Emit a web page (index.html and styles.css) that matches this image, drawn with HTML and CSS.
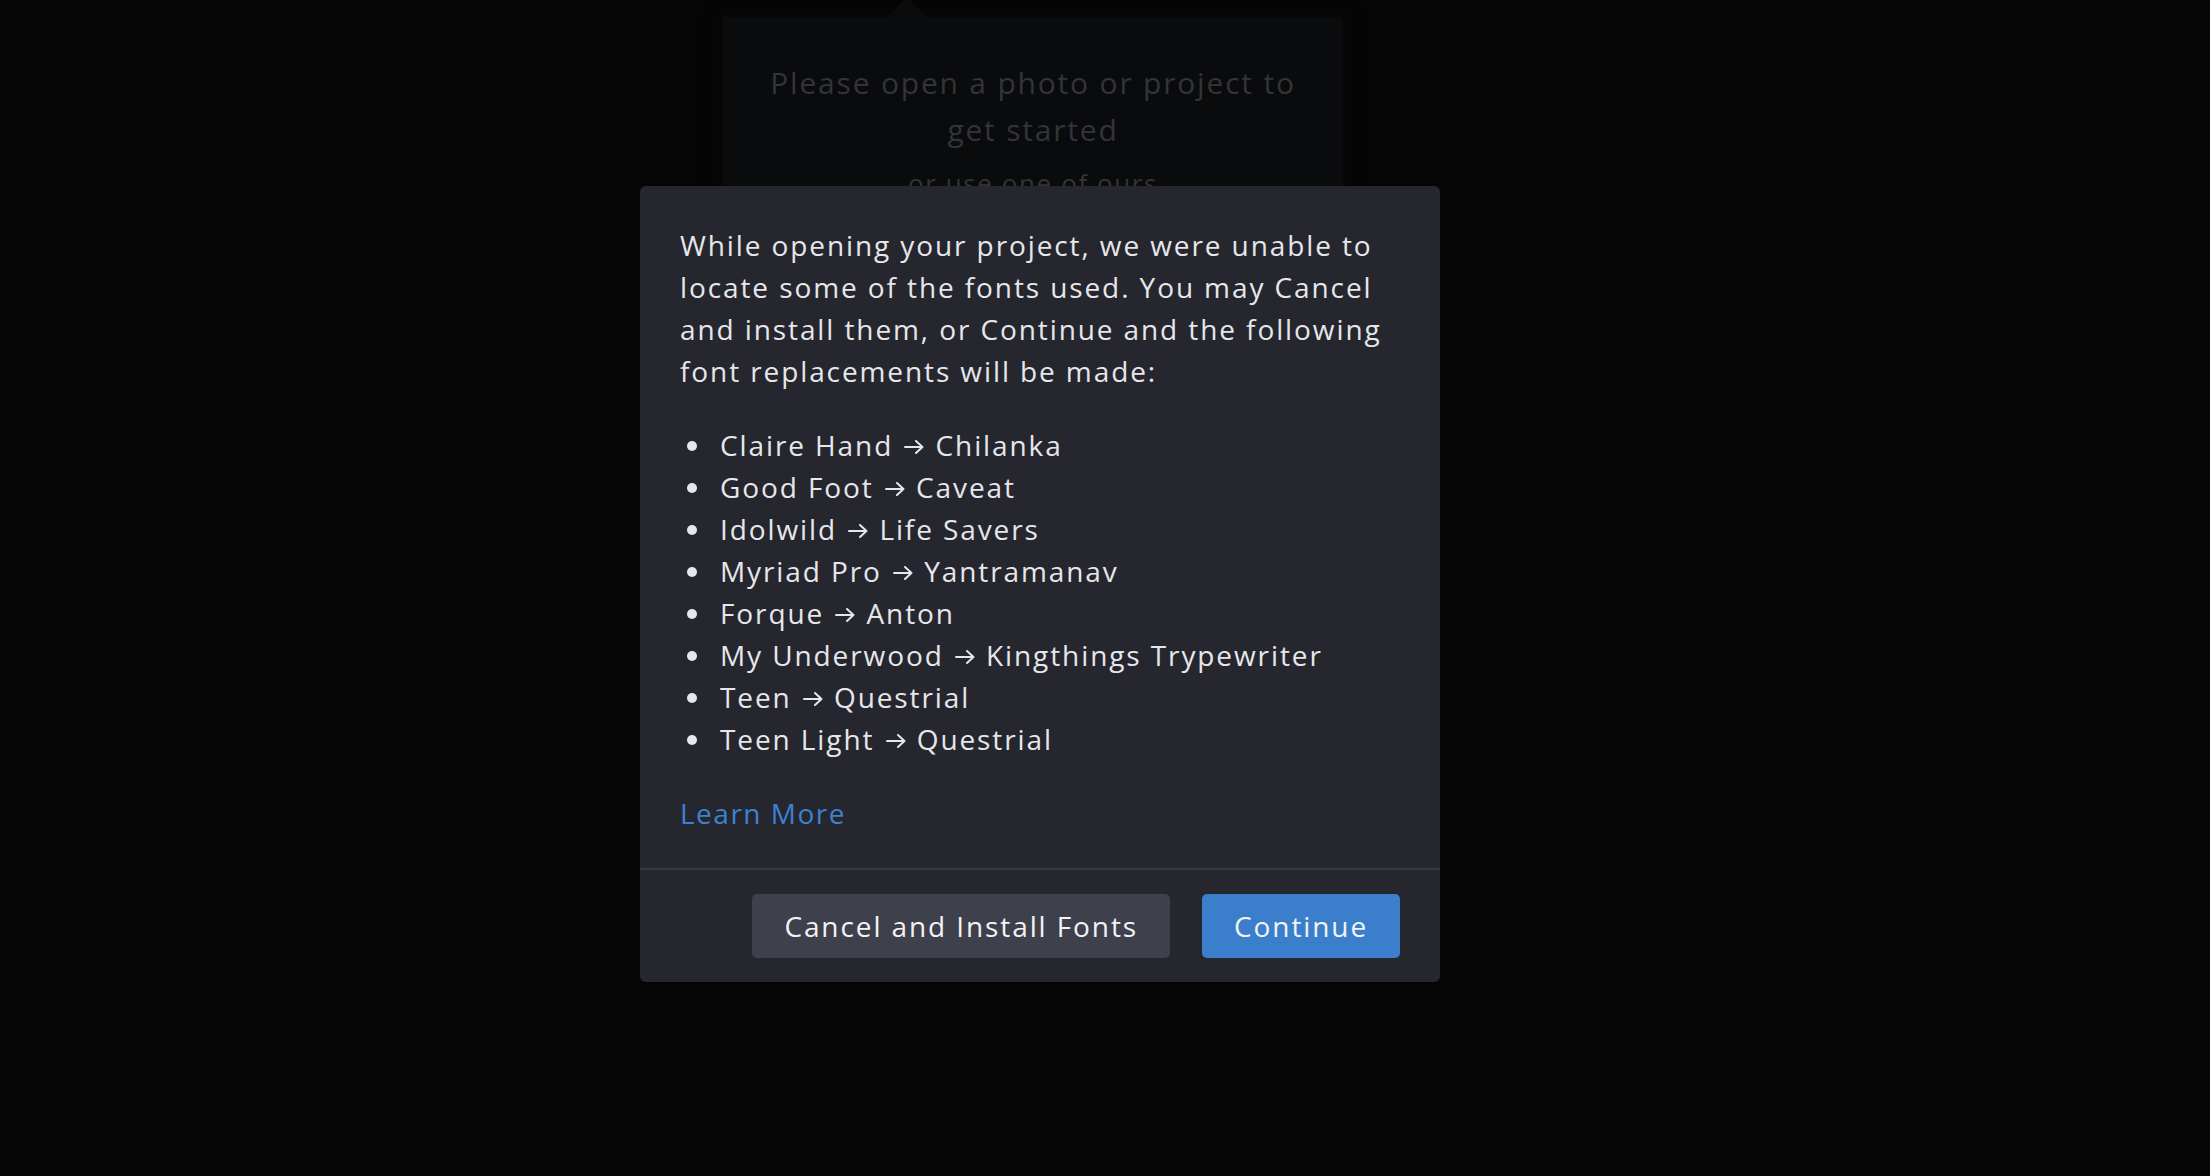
FILE: index.html
```html
<!DOCTYPE html>
<html lang="en">
<head>
<meta charset="utf-8">
<title>Missing fonts</title>
<link rel="stylesheet" href="styles.css">
</head>
<body>
<div class="app">
  <main class="stage">
    <div class="popover">
      <p class="popover-title">Please open a photo or project to get started</p>
      <p class="popover-sub">or use one of ours</p>
    </div>
  </main>
</div>
<div class="overlay">
  <div class="dialog" role="dialog">
    <div class="dialog-body">
      <p class="intro">While opening your project, we were unable to locate some of the fonts used. You may Cancel and install them, or Continue and the following font replacements will be made:</p>
      <ul class="fontlist">
        <li>Claire Hand <svg class="arrow" viewBox="0 0 20 14" aria-label="to"><path d="M1 7H18.5M12 1L18.5 7L12 13"/></svg> Chilanka</li>
        <li>Good Foot <svg class="arrow" viewBox="0 0 20 14" aria-label="to"><path d="M1 7H18.5M12 1L18.5 7L12 13"/></svg> Caveat</li>
        <li>Idolwild <svg class="arrow" viewBox="0 0 20 14" aria-label="to"><path d="M1 7H18.5M12 1L18.5 7L12 13"/></svg> Life Savers</li>
        <li>Myriad Pro <svg class="arrow" viewBox="0 0 20 14" aria-label="to"><path d="M1 7H18.5M12 1L18.5 7L12 13"/></svg> Yantramanav</li>
        <li>Forque <svg class="arrow" viewBox="0 0 20 14" aria-label="to"><path d="M1 7H18.5M12 1L18.5 7L12 13"/></svg> Anton</li>
        <li>My Underwood <svg class="arrow" viewBox="0 0 20 14" aria-label="to"><path d="M1 7H18.5M12 1L18.5 7L12 13"/></svg> Kingthings Trypewriter</li>
        <li>Teen <svg class="arrow" viewBox="0 0 20 14" aria-label="to"><path d="M1 7H18.5M12 1L18.5 7L12 13"/></svg> Questrial</li>
        <li>Teen Light <svg class="arrow" viewBox="0 0 20 14" aria-label="to"><path d="M1 7H18.5M12 1L18.5 7L12 13"/></svg> Questrial</li>
      </ul>
      <a class="learn" href="#">Learn More</a>
    </div>
    <div class="dialog-footer">
      <button class="btn btn-secondary">Cancel and Install Fonts</button>
      <button class="btn btn-primary">Continue</button>
    </div>
  </div>
</div>
</body>
</html>
```
FILE: styles.css
```css
html, body {
  margin: 0;
  padding: 0;
  height: 100%;
}
body {
  background: #050505;
  font-family: "Open Sans", "Noto Sans", "DejaVu Sans", sans-serif;
  overflow: hidden;
  width: 2210px;
  height: 1176px;
}
.app {
  height: 100%;
  display: flex;
}
.stage {
  flex: 1;
  display: flex;
  flex-direction: column;
  align-items: center;
  padding: 17px 144px 0 0;
}
.popover {
  position: relative;
  width: 620px;
  box-sizing: border-box;
  background: #0a0b0d;
  padding: 42px 30px 0;
  height: 240px;
  text-align: center;
  box-shadow: 0 0 10px 6px #080808;
}
.popover::before {
  content: "";
  position: absolute;
  top: -14px;
  left: 170px;
  width: 28px;
  height: 28px;
  background: #0a0b0d;
  transform: rotate(45deg);
}
.popover-title {
  margin: 0;
  font-size: 30px;
  line-height: 47px;
  color: #333438;
  letter-spacing: 1.8px;
}
.popover-sub {
  margin: 12px 0 0;
  font-size: 26px;
  line-height: 36px;
  color: #333438;
  letter-spacing: 1.6px;
}
.overlay {
  position: fixed;
  inset: 0;
  display: flex;
  align-items: center;
  justify-content: center;
  padding: 0 130px 8px 0;
}
.dialog {
  width: 800px;
  background: #25262e;
  border-radius: 6px;
  color: #e6e7ea;
  letter-spacing: 1.9px;
}
.dialog-body {
  padding: 38px 40px 34px;
}
.intro {
  margin: 0 0 32px;
  font-size: 28px;
  line-height: 42px;
}
.fontlist {
  list-style: none;
  margin: 0 0 32px;
  padding: 0;
  font-size: 28px;
  line-height: 42px;
}
.fontlist li {
  position: relative;
  padding-left: 40px;
}
.fontlist li::before {
  content: "";
  position: absolute;
  left: 7px;
  top: 17px;
  width: 10px;
  height: 10px;
  border-radius: 50%;
  background: #e6e7ea;
}
.arrow {
  width: 20px;
  height: 14px;
  vertical-align: 2px;
  margin: 0 2px;
  fill: none;
  stroke: #e6e7ea;
  stroke-width: 2;
  stroke-linecap: round;
  stroke-linejoin: round;
}
.learn {
  display: block;
  font-size: 28px;
  line-height: 42px;
  color: #3d82cf;
  text-decoration: none;
  letter-spacing: 1.5px;
}
.dialog-footer {
  border-top: 2px solid #383942;
  display: flex;
  justify-content: flex-end;
  gap: 32px;
  padding: 24px 40px 24px;
}
.btn {
  font-family: inherit;
  font-size: 28px;
  letter-spacing: 1.9px;
  height: 64px;
  border: none;
  border-radius: 5px;
  padding: 0 32px;
  color: #f2f3f5;
  cursor: pointer;
}
.btn-secondary {
  background: #3e404b;
}
.btn-primary {
  background: #3b7fcc;
}
```
